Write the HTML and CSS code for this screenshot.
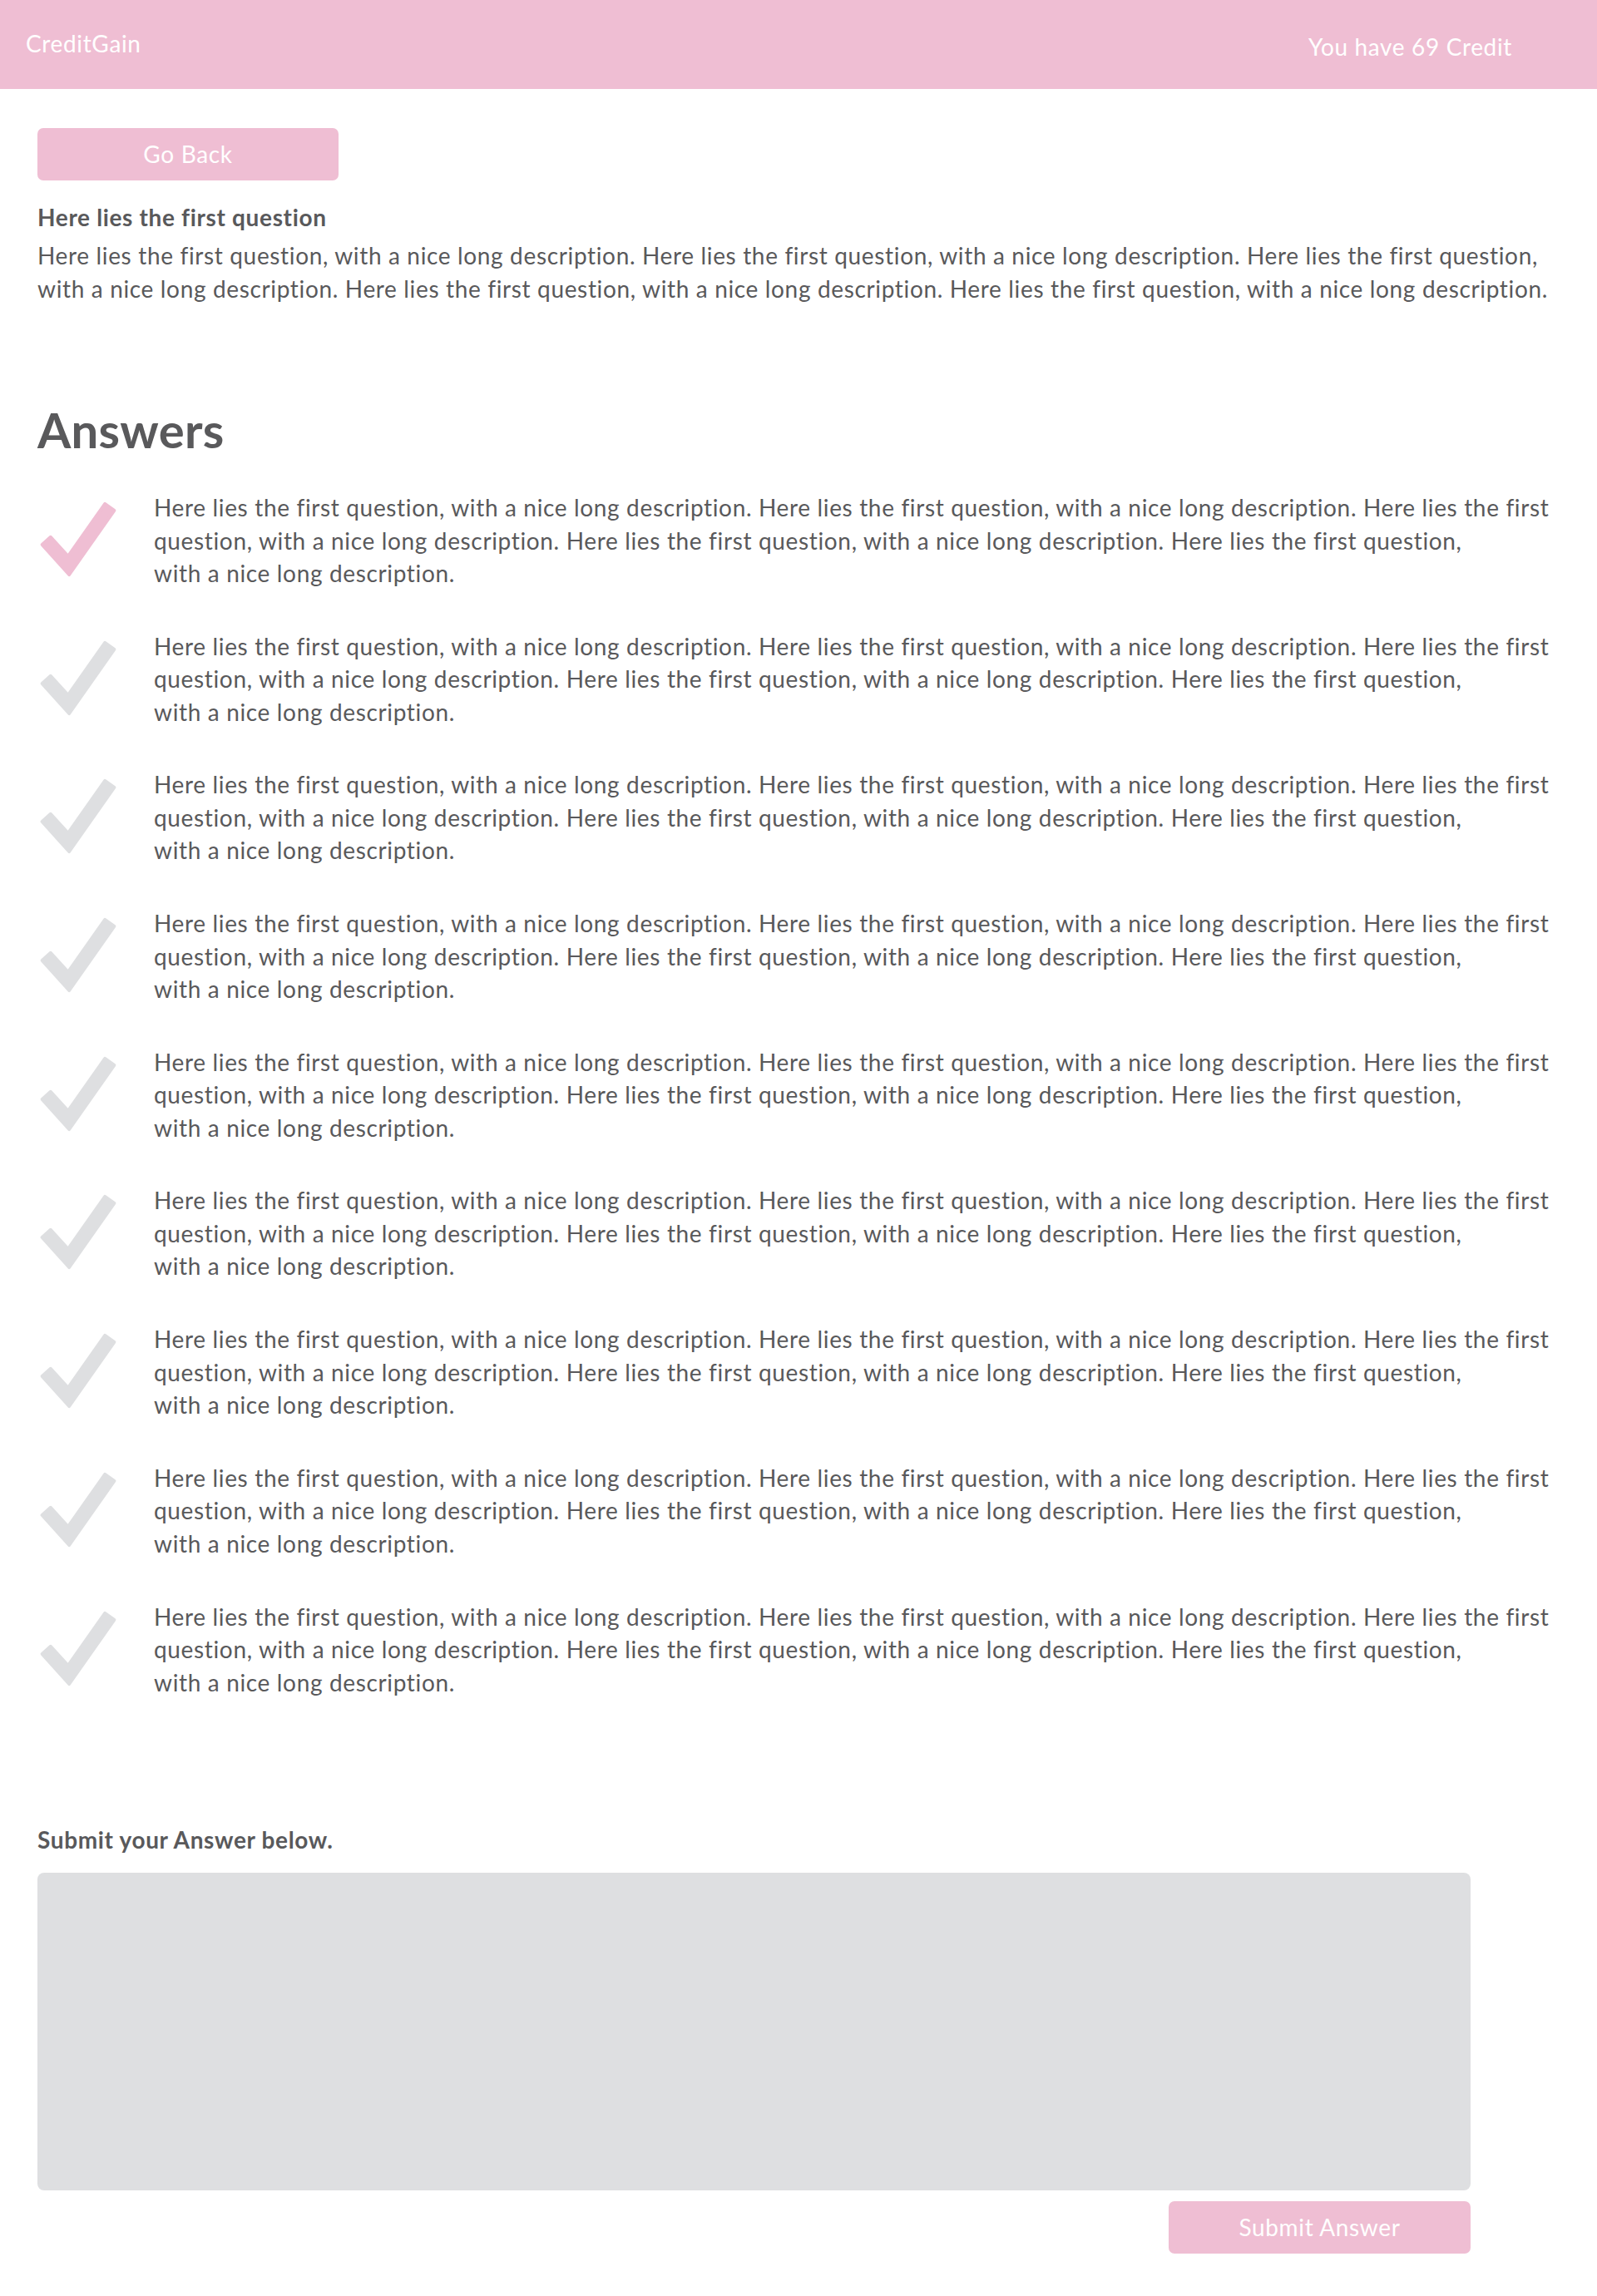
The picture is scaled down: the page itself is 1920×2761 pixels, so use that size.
FILE: index.html
```html
<!DOCTYPE html>
<html lang="en">
<head>
<meta charset="utf-8">
<title>CreditGain</title>
<link rel="stylesheet" href="styles.css">
</head>
<body>
<header class="topbar">
  <div class="brand">CreditGain</div>
  <div class="credit">You have 69 Credit</div>
</header>
<main class="page">
  <button class="btn btn-back" type="button">Go Back</button>
  <h2 class="q-title">Here lies the first question</h2>
  <p class="q-desc">Here lies the first question, with a nice long description. Here lies the first question, with a nice long description. Here lies the first question,<br>with a nice long description. Here lies the first question, with a nice long description. Here lies the first question, with a nice long description.</p>

  <h1 class="answers-title">Answers</h1>
  <ul class="answers">
    <li class="answer answer-selected">
      <svg class="check" viewBox="-1.2 -1 95.9 94.2"><polygon points="13.2,43.3 34.4,66.8 79.3,3 90.7,11 35.7,89.2 2.8,52.7"/></svg>
      <p class="answer-text">Here lies the first question, with a nice long description. Here lies the first question, with a nice long description. Here lies the first<br>question, with a nice long description. Here lies the first question, with a nice long description. Here lies the first question,<br>with a nice long description.</p>
    </li>
    <li class="answer">
      <svg class="check" viewBox="-1.2 -1 95.9 94.2"><polygon points="13.2,43.3 34.4,66.8 79.3,3 90.7,11 35.7,89.2 2.8,52.7"/></svg>
      <p class="answer-text">Here lies the first question, with a nice long description. Here lies the first question, with a nice long description. Here lies the first<br>question, with a nice long description. Here lies the first question, with a nice long description. Here lies the first question,<br>with a nice long description.</p>
    </li>
    <li class="answer">
      <svg class="check" viewBox="-1.2 -1 95.9 94.2"><polygon points="13.2,43.3 34.4,66.8 79.3,3 90.7,11 35.7,89.2 2.8,52.7"/></svg>
      <p class="answer-text">Here lies the first question, with a nice long description. Here lies the first question, with a nice long description. Here lies the first<br>question, with a nice long description. Here lies the first question, with a nice long description. Here lies the first question,<br>with a nice long description.</p>
    </li>
    <li class="answer">
      <svg class="check" viewBox="-1.2 -1 95.9 94.2"><polygon points="13.2,43.3 34.4,66.8 79.3,3 90.7,11 35.7,89.2 2.8,52.7"/></svg>
      <p class="answer-text">Here lies the first question, with a nice long description. Here lies the first question, with a nice long description. Here lies the first<br>question, with a nice long description. Here lies the first question, with a nice long description. Here lies the first question,<br>with a nice long description.</p>
    </li>
    <li class="answer">
      <svg class="check" viewBox="-1.2 -1 95.9 94.2"><polygon points="13.2,43.3 34.4,66.8 79.3,3 90.7,11 35.7,89.2 2.8,52.7"/></svg>
      <p class="answer-text">Here lies the first question, with a nice long description. Here lies the first question, with a nice long description. Here lies the first<br>question, with a nice long description. Here lies the first question, with a nice long description. Here lies the first question,<br>with a nice long description.</p>
    </li>
    <li class="answer">
      <svg class="check" viewBox="-1.2 -1 95.9 94.2"><polygon points="13.2,43.3 34.4,66.8 79.3,3 90.7,11 35.7,89.2 2.8,52.7"/></svg>
      <p class="answer-text">Here lies the first question, with a nice long description. Here lies the first question, with a nice long description. Here lies the first<br>question, with a nice long description. Here lies the first question, with a nice long description. Here lies the first question,<br>with a nice long description.</p>
    </li>
    <li class="answer">
      <svg class="check" viewBox="-1.2 -1 95.9 94.2"><polygon points="13.2,43.3 34.4,66.8 79.3,3 90.7,11 35.7,89.2 2.8,52.7"/></svg>
      <p class="answer-text">Here lies the first question, with a nice long description. Here lies the first question, with a nice long description. Here lies the first<br>question, with a nice long description. Here lies the first question, with a nice long description. Here lies the first question,<br>with a nice long description.</p>
    </li>
    <li class="answer">
      <svg class="check" viewBox="-1.2 -1 95.9 94.2"><polygon points="13.2,43.3 34.4,66.8 79.3,3 90.7,11 35.7,89.2 2.8,52.7"/></svg>
      <p class="answer-text">Here lies the first question, with a nice long description. Here lies the first question, with a nice long description. Here lies the first<br>question, with a nice long description. Here lies the first question, with a nice long description. Here lies the first question,<br>with a nice long description.</p>
    </li>
    <li class="answer">
      <svg class="check" viewBox="-1.2 -1 95.9 94.2"><polygon points="13.2,43.3 34.4,66.8 79.3,3 90.7,11 35.7,89.2 2.8,52.7"/></svg>
      <p class="answer-text">Here lies the first question, with a nice long description. Here lies the first question, with a nice long description. Here lies the first<br>question, with a nice long description. Here lies the first question, with a nice long description. Here lies the first question,<br>with a nice long description.</p>
    </li>
  </ul>

  <form class="submit-form">
    <label class="submit-label" for="answer">Submit your Answer below.</label>
    <textarea class="answer-input" id="answer"></textarea>
    <button class="btn btn-submit" type="button">Submit Answer</button>
  </form>
</main>
</body>
</html>
```

FILE: styles.css
```css
* { box-sizing: border-box; }

html, body {
  margin: 0;
  padding: 0;
  background: #ffffff;
}

body {
  font-family: Lato, "Noto Sans", sans-serif;
  color: #59595b;
  font-size: 28px;
  letter-spacing: 0.65px;
}

.topbar {
  height: 107px;
  background: #efbed3;
  color: #ffffff;
  display: flex;
  justify-content: space-between;
  align-items: flex-start;
  padding: 0 102px 0 31px;
}

.brand {
  font-size: 28px;
  line-height: 32px;
  padding-top: 36px;
}

.credit {
  font-size: 28px;
  line-height: 32px;
  padding-top: 40px;
}

.page {
  padding: 0 45px 53px;
}

.btn {
  display: block;
  border: 0;
  border-radius: 7px;
  background: #efbed3;
  color: #ffffff;
  font-family: inherit;
  font-size: 28px;
  letter-spacing: 0.65px;
  height: 63px;
  line-height: 63px;
  padding: 0;
  text-align: center;
  cursor: pointer;
}

.btn-back {
  margin-top: 47px;
  width: 362px;
}

.q-title {
  margin: 24px 0 0;
  font-size: 28px;
  font-weight: 700;
  line-height: 40px;
}

.q-desc {
  margin: 6px 0 0;
  line-height: 40px;
  white-space: nowrap;
}

.answers-title {
  margin: 116px 0 0;
  font-size: 58px;
  font-weight: 700;
  letter-spacing: 0.3px;
  line-height: 68px;
}

.answers {
  list-style: none;
  margin: 40px 0 0;
  padding: 0;
  display: flex;
  flex-direction: column;
  gap: 48.2px;
}

.answer {
  display: grid;
  grid-template-columns: 140px 1fr;
}

.check {
  width: 96px;
  height: 93px;
  margin: 11px 0 0 1px;
  overflow: visible;
}

.check polygon {
  fill: #dedfe1;
  stroke: #dedfe1;
  stroke-width: 4;
  stroke-linejoin: round;
}

.answer-selected .check polygon {
  fill: #efbed3;
  stroke: #efbed3;
}

.answer-text {
  margin: 0;
  line-height: 39.5px;
  white-space: nowrap;
}

.submit-form {
  width: 1723px;
  margin-top: 149px;
  display: flex;
  flex-direction: column;
}

.submit-label {
  font-weight: 700;
  line-height: 40px;
}

.answer-input {
  display: block;
  margin-top: 20px;
  width: 100%;
  height: 382px;
  border: 0;
  border-radius: 8px;
  background: #dedfe1;
  resize: none;
  font-family: inherit;
}

.btn-submit {
  align-self: flex-end;
  margin-top: 13px;
  width: 363px;
}
```
